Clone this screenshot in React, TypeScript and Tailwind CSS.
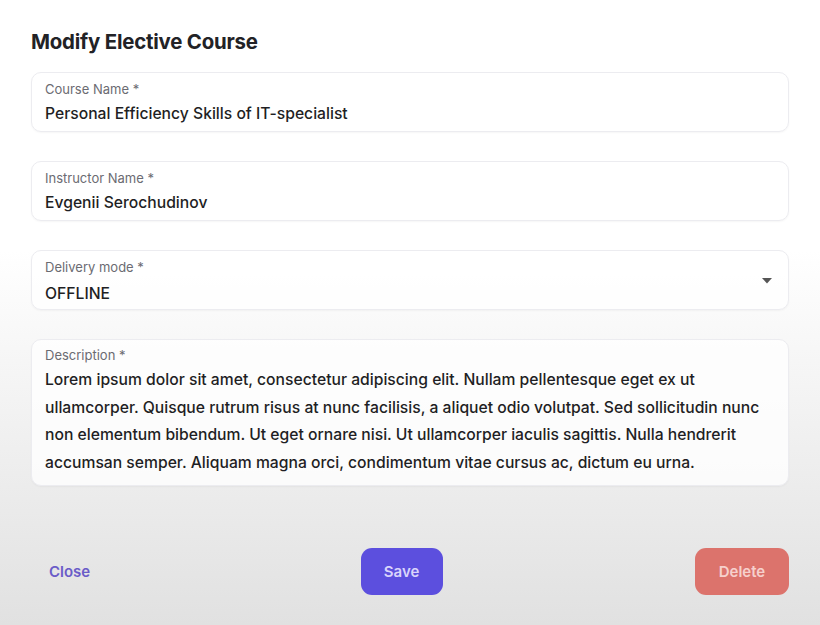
import React from "react";

const fieldBox =
  "rounded-[10px] border border-[#ececf0] bg-white/80 shadow-[0_1px_2px_rgba(0,0,0,0.04)] px-[13px]";

function Field({ label, value, select }: { label: string; value: string; select?: boolean }) {
  return (
    <div className={`${fieldBox} relative h-[60px] pt-[8px]`}>
      <div className="text-[13px] leading-[17px] text-[#6b6b72]">{label} *</div>
      <div className={`${select ? "mt-[8px]" : "mt-[6px]"} text-[15.7px] leading-[20px] font-medium text-[#1f1f24]`}>
        {value}
      </div>
      {select && (
        <svg className="absolute right-[16px] top-[27px]" width="10" height="6" viewBox="0 0 10 6">
          <path d="M0 0h10L5 5.5z" fill="#555" />
        </svg>
      )}
    </div>
  );
}

export default function App() {
  return (
    <div
      className="w-[820px] h-[625px] overflow-hidden bg-gradient-to-b from-white via-white via-40% to-[#e1e1e1] px-[31px] pt-[29px]"
      style={{ fontFamily: "Inter, 'Noto Sans', sans-serif" }}
    >
      <h1 className="text-[20.4px] leading-[26px] font-bold text-[#222226] tracking-[-0.2px]">
        Modify Elective Course
      </h1>
      <div className="mt-[17px] flex flex-col gap-[29px]">
        <Field label="Course Name" value="Personal Efficiency Skills of IT-specialist" />
        <Field label="Instructor Name" value="Evgenii Serochudinov" />
        <Field label="Delivery mode" value="OFFLINE" select />
        <div className={`${fieldBox} h-[147px] pt-[7px]`}>
          <div className="text-[13px] leading-[17px] text-[#6b6b72]">Description *</div>
          <p className="mt-[2px] whitespace-nowrap text-[15.7px] leading-[27.5px] font-medium text-[#1f1f24]">
            Lorem ipsum dolor sit amet, consectetur adipiscing elit. Nullam pellentesque eget ex ut
            <br />
            ullamcorper. Quisque rutrum risus at nunc facilisis, a aliquet odio volutpat. Sed sollicitudin nunc
            <br />
            non elementum bibendum. Ut eget ornare nisi. Ut ullamcorper iaculis sagittis. Nulla hendrerit
            <br />
            accumsan semper. Aliquam magna orci, condimentum vitae cursus ac, dictum eu urna.
          </p>
        </div>
      </div>
      <div className="mt-[62px] flex items-center justify-between">
        <button className="ml-[18px] mt-[2px] text-[15px] font-semibold text-[#6a5cc8]">Close</button>
        <button className="ml-[18px] h-[47px] w-[82px] rounded-[11px] bg-[#5c4fde] pt-[2px] text-[15px] font-semibold text-[#d9d4fb]">
          Save
        </button>
        <button className="h-[47px] w-[94px] rounded-[11px] bg-[#dc736c] pt-[2px] text-[15px] font-semibold text-[#f6d0cc]">
          Delete
        </button>
      </div>
    </div>
  );
}
